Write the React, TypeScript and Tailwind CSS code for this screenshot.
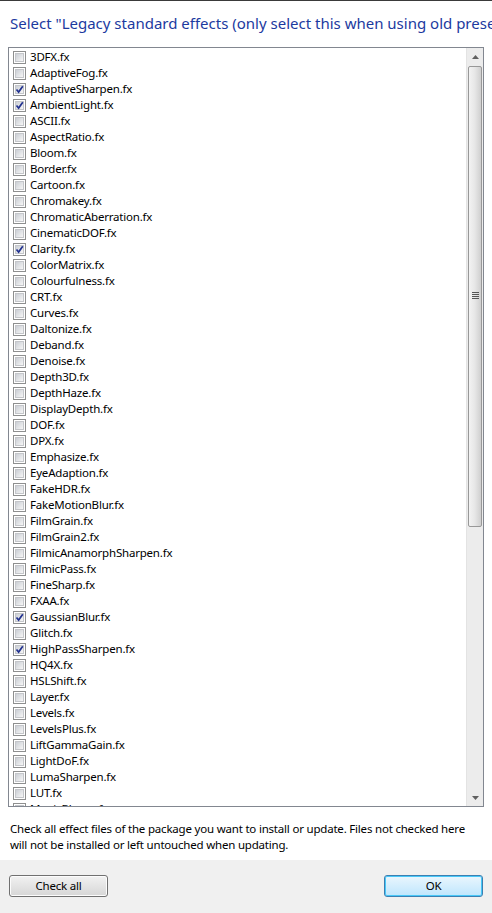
import React from "react";

const effects: [string, boolean][] = [
  ["3DFX.fx", false],
  ["AdaptiveFog.fx", false],
  ["AdaptiveSharpen.fx", true],
  ["AmbientLight.fx", true],
  ["ASCII.fx", false],
  ["AspectRatio.fx", false],
  ["Bloom.fx", false],
  ["Border.fx", false],
  ["Cartoon.fx", false],
  ["Chromakey.fx", false],
  ["ChromaticAberration.fx", false],
  ["CinematicDOF.fx", false],
  ["Clarity.fx", true],
  ["ColorMatrix.fx", false],
  ["Colourfulness.fx", false],
  ["CRT.fx", false],
  ["Curves.fx", false],
  ["Daltonize.fx", false],
  ["Deband.fx", false],
  ["Denoise.fx", false],
  ["Depth3D.fx", false],
  ["DepthHaze.fx", false],
  ["DisplayDepth.fx", false],
  ["DOF.fx", false],
  ["DPX.fx", false],
  ["Emphasize.fx", false],
  ["EyeAdaption.fx", false],
  ["FakeHDR.fx", false],
  ["FakeMotionBlur.fx", false],
  ["FilmGrain.fx", false],
  ["FilmGrain2.fx", false],
  ["FilmicAnamorphSharpen.fx", false],
  ["FilmicPass.fx", false],
  ["FineSharp.fx", false],
  ["FXAA.fx", false],
  ["GaussianBlur.fx", true],
  ["Glitch.fx", false],
  ["HighPassSharpen.fx", true],
  ["HQ4X.fx", false],
  ["HSLShift.fx", false],
  ["Layer.fx", false],
  ["Levels.fx", false],
  ["LevelsPlus.fx", false],
  ["LiftGammaGain.fx", false],
  ["LightDoF.fx", false],
  ["LumaSharpen.fx", false],
  ["LUT.fx", false],
  ["MagicBloom.fx", false],
];

function CheckBox({ checked }: { checked: boolean }) {
  return (
    <div className="w-[13px] h-[13px] border border-[#8e8f8f] bg-white p-[1px] shrink-0">
      <div className="relative w-full h-full bg-gradient-to-br from-[#cbcfd5] to-[#f6f6f6] border border-[#c4c6ca]">
        {checked && (
          <svg viewBox="0 0 9 9" className="absolute -left-[1px] -top-[1px] w-[9px] h-[9px]">
            <path d="M1.5 4.5 L3.6 7 L7.8 1.2" fill="none" stroke="#21318f" strokeWidth="1.7" />
          </svg>
        )}
      </div>
    </div>
  );
}

function Row({ name, checked }: { name: string; checked: boolean }) {
  return (
    <div className="h-4 flex items-center gap-[4px] pl-[4px]">
      <CheckBox checked={checked} />
      <span className="text-[11.5px] tracking-[-0.2px] leading-4 text-black whitespace-nowrap">{name}</span>
    </div>
  );
}

function ScrollBar() {
  return (
    <div className="w-[17px] shrink-0 flex flex-col bg-[#ececec] border-l border-[#e3e3e3]">
      <div className="h-[17px] flex items-center justify-center">
        <svg viewBox="0 0 7 4" className="w-[7px] h-[4px]">
          <path d="M0 4 L3.5 0 L7 4 Z" fill="#606060" />
        </svg>
      </div>
      <div className="mx-[1px] mt-[1px] h-[461px] rounded-[2px] border border-[#989898] bg-gradient-to-r from-[#f3f3f3] via-[#e6e6e6] to-[#cfcfcf] flex items-center justify-center">
        <div className="flex flex-col gap-[1px] mt-[-2px]">
          <div className="w-[7px] h-[1px] bg-[#555]" />
          <div className="w-[7px] h-[1px] bg-[#555]" />
          <div className="w-[7px] h-[1px] bg-[#555]" />
          <div className="w-[7px] h-[1px] bg-[#555]" />
        </div>
      </div>
      <div className="flex-1" />
      <div className="h-[17px] flex items-center justify-center">
        <svg viewBox="0 0 7 4" className="w-[7px] h-[4px]">
          <path d="M0 0 L3.5 4 L7 0 Z" fill="#606060" />
        </svg>
      </div>
    </div>
  );
}

function Button({ label, primary }: { label: string; primary?: boolean }) {
  return (
    <button
      className={
        "w-[99px] h-[22px] rounded-[3px] text-[11.5px] tracking-[-0.2px] text-black bg-gradient-to-b " +
        (primary
          ? "border border-[#3c7fb1] from-[#eaf6fd] to-[#bee6fd] shadow-[inset_0_0_0_1px_#48c8f8]"
          : "border border-[#707070] from-[#f2f2f2] to-[#d6d6d6] shadow-[inset_0_0_0_1px_#fcfcfc]")
      }
    >
      {label}
    </button>
  );
}

export default function App() {
  return (
    <div
      className="w-[492px] h-[913px] flex flex-col bg-white border-t border-[#3a3a3a] overflow-hidden"
      style={{ fontFamily: '"Noto Sans", "Open Sans", sans-serif' }}
    >
      <div className="px-[10px] pt-[12px] h-[46px] text-[15px] leading-5 text-[#1c3aa0] whitespace-nowrap overflow-hidden">
        Select "Legacy standard effects (only select this when using old presets)"
      </div>

      <div className="mx-[8px] h-[760px] border border-[#828790] flex overflow-hidden">
        <div className="flex-1 pt-[1px] overflow-hidden">
          {effects.map(([name, checked]) => (
            <Row key={name} name={name} checked={checked} />
          ))}
        </div>
        <ScrollBar />
      </div>

      <div className="px-[10px] pt-[14px] h-[53px] text-[11.5px] tracking-[-0.2px] leading-4 text-black">
        Check all effect files of the package you want to install or update. Files not checked here will not be installed or left untouched when updating.
      </div>

      <div className="flex-1 bg-[#f0f0f0] flex items-center justify-between px-[9px] pb-[2px]">
        <Button label="Check all" />
        <Button label="OK" primary />
      </div>
    </div>
  );
}
